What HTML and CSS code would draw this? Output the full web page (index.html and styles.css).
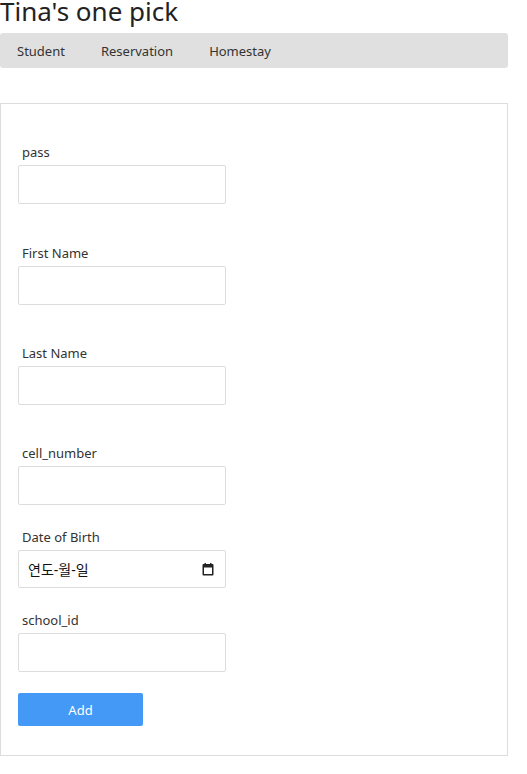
FILE: index.html
```html
<!DOCTYPE html>
<html lang="ko">
<head>
<meta charset="utf-8">
<title>Tina's one pick</title>
<link rel="stylesheet" href="styles.css">
</head>
<body>
<div class="page">
  <h1 class="title">Tina's one pick</h1>
  <nav class="nav">
    <a class="nav-item">Student</a>
    <a class="nav-item">Reservation</a>
    <a class="nav-item">Homestay</a>
  </nav>
  <form class="card">
    <div class="group group-first">
      <label class="label">pass</label>
      <input class="input" type="text">
    </div>
    <div class="group">
      <label class="label">First Name</label>
      <input class="input" type="text">
    </div>
    <div class="group">
      <label class="label">Last Name</label>
      <input class="input" type="text">
    </div>
    <div class="group group-tight">
      <label class="label">cell_number</label>
      <input class="input" type="text">
    </div>
    <div class="group group-tight">
      <label class="label">Date of Birth</label>
      <div class="input date">
        <span class="date-text">연도-월-일</span>
        <svg class="cal" width="12" height="13" viewBox="0 0 12 13"><rect x="0.5" y="1" width="11" height="11.5" rx="1" fill="#222"/><rect x="2" y="4.5" width="8" height="6.5" fill="#fff"/><rect x="2.5" y="0" width="1.5" height="2" fill="#222"/><rect x="8" y="0" width="1.5" height="2" fill="#222"/></svg>
      </div>
    </div>
    <div class="group group-last">
      <label class="label">school_id</label>
      <input class="input" type="text">
    </div>
    <button class="btn" type="button">Add</button>
  </form>
</div>
</body>
</html>
```
FILE: styles.css
```css
html, body {
  margin: 0;
  padding: 0;
  background: #fff;
}
body {
  font-family: "Noto Sans", "Noto Sans CJK KR", sans-serif;
  color: #333;
}
.page {
  width: 508px;
}
.title {
  margin: 0;
  padding-bottom: 11px;
  font-size: 26px;
  font-weight: 400;
  line-height: 22px;
  color: #222;
}
.nav {
  display: flex;
  align-items: center;
  gap: 36px;
  height: 35px;
  padding-left: 17px;
  background: #e0e0e0;
  border-radius: 3px;
}
.nav-item {
  font-size: 13px;
  color: #333;
}
.card {
  margin-top: 35px;
  border: 1px solid #ddd;
  padding: 39px 17px 28px;
  display: flex;
  flex-direction: column;
  box-sizing: border-box;
  height: 653px;
}
.group {
  display: flex;
  flex-direction: column;
  margin-bottom: 39px;
}
.group-first {
  margin-bottom: 40px;
}
.group-tight {
  margin-bottom: 23px;
}
.group-last {
  margin-bottom: 21px;
}
.label {
  font-size: 13px;
  line-height: 18px;
  height: 18px;
  padding-left: 4px;
  margin-bottom: 4px;
  color: #333;
}
.input {
  box-sizing: border-box;
  width: 208px;
  height: 39px;
  border: 1px solid #ddd;
  border-radius: 2px;
  background: #fff;
  margin: 0;
  padding: 0 8px;
  font-size: 13px;
}
.date {
  height: 38px;
  display: flex;
  align-items: center;
  justify-content: space-between;
  padding: 0 11px 0 9px;
}
.date-text {
  font-size: 14px;
  color: #111;
}
.btn {
  width: 125px;
  height: 33px;
  border: none;
  border-radius: 2px;
  background: #4499f7;
  color: #fff;
  font-family: inherit;
  font-size: 13px;
  padding: 0;
}
```
